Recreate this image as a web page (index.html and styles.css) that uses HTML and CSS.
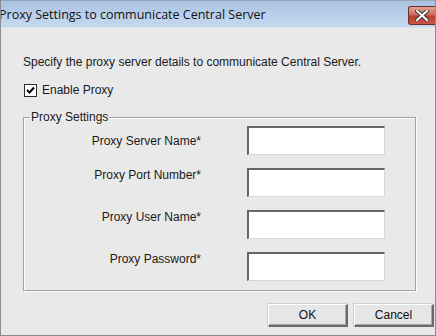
FILE: index.html
```html
<!DOCTYPE html>
<html>
  <head>
    <title>Proxy Settings</title>
    <link rel="stylesheet" href="styles.css">
  </head>
  <body>

    <div class="window">
      <div class="title-bar">
        <span class="title-text">Proxy Settings to communicate Central Server</span>
        <span class="close-button">
          <svg width="14" height="11" viewBox="0 0 14 11">
            <path d="M2 1 L12 10 M12 1 L2 10" stroke="#3a3a3a" stroke-width="4" stroke-linecap="square"/>
            <path d="M2 1 L12 10 M12 1 L2 10" stroke="#ffffff" stroke-width="2" stroke-linecap="square"/>
          </svg>
        </span>
      </div>

      <div class="content">
        <p class="intro">Specify the proxy server details to communicate Central Server.</p>

        <div class="check-row">
          <span class="check-box">
            <svg width="9" height="9" viewBox="0 0 9 9">
              <path d="M1 4 L3.5 6.5 L8 1.5" stroke="#000" stroke-width="2" fill="none"/>
            </svg>
          </span>
          <span>Enable Proxy</span>
        </div>

        <fieldset class="group">
          <legend>Proxy Settings</legend>
          <div class="form-grid">
            <label class="field-label first-label">Proxy Server Name*</label>
            <div class="text-box"></div>

            <label class="field-label">Proxy Port Number*</label>
            <div class="text-box"></div>

            <label class="field-label">Proxy User Name*</label>
            <div class="text-box"></div>

            <label class="field-label">Proxy Password*</label>
            <div class="text-box"></div>
          </div>
        </fieldset>

        <div class="button-row">
          <button class="dlg-button">OK</button>
          <button class="dlg-button">Cancel</button>
        </div>
      </div>
    </div>

  </body>
</html>
```

FILE: styles.css
```css
body{
  margin: 0;
  background-color: #e9e9e9;
}
p{
  margin: 0;
}
.window{
  width: 436px;
  height: 336px;
  box-sizing: border-box;
  border: 1px solid #8c8c8c;
  border-top: none;
  background-color: #e9e9e9;
  font-family: "Liberation Sans", Arial, sans-serif;
  font-size: 12px;
  color: #1a1a1a;
  overflow: hidden;
}
.title-bar{
  display: flex;
  align-items: flex-start;
  height: 26px;
  border-top: 1px solid #9aa7b6;
  border-bottom: 1px solid #dfe8f2;
  background: linear-gradient(#a9c2e1, #bcd2ec 60%, #c3d7ee);
}
.title-text{
  font-family: "Open Sans", "Noto Sans", sans-serif;
  font-size: 12.5px;
  line-height: 28px;
  color: #111;
  margin-left: -2px;
}
.close-button{
  display: flex;
  justify-content: center;
  align-items: center;
  width: 26px;
  height: 17px;
  margin-left: auto;
  margin-top: 5px;
  border: 1px solid #6b3028;
  border-right: none;
  border-radius: 3px 0 0 3px;
  background: linear-gradient(#e3a295, #cf6b5c 45%, #bd3d2d 55%, #c9584a);
}
.content{
  padding-left: 22px;
  padding-top: 27px;
}
.intro{
  line-height: 14px;
}
.check-row{
  display: flex;
  align-items: center;
  gap: 5px;
  margin-top: 14px;
  height: 14px;
}
.check-box{
  display: flex;
  justify-content: center;
  align-items: center;
  width: 11px;
  height: 11px;
  border: 1px solid #2a2a2a;
  background-color: #fff;
  margin-left: 1px;
}
.group{
  width: 393px;
  box-sizing: border-box;
  margin: 13px 0 0 0;
  padding: 0 0 9px 0;
  border: 1px solid #a0a0a0;
  box-shadow: 1px 1px 0 #fff, inset 1px 1px 0 #fff;
}
.group legend{
  margin-left: 6px;
  padding: 0 1px;
  line-height: 14px;
}
.form-grid{
  display: grid;
  grid-template-columns: 177px 138px;
  column-gap: 46px;
  row-gap: 13px;
  padding-top: 2px;
}
.field-label{
  text-align: right;
  line-height: 14px;
  align-self: start;
}
.first-label{
  padding-top: 8px;
}
.text-box{
  height: 29px;
  box-sizing: border-box;
  background-color: #fff;
  border-top: 2px solid #666;
  border-left: 2px solid #666;
  border-bottom: 1px solid #d8d8d8;
  border-right: 1px solid #d8d8d8;
}
.button-row{
  display: flex;
  justify-content: flex-end;
  gap: 6px;
  margin-top: 13px;
  padding-right: 1px;
}
.dlg-button{
  width: 80px;
  height: 23px;
  box-sizing: border-box;
  padding: 0;
  font-family: "Liberation Sans", Arial, sans-serif;
  font-size: 12px;
  color: #111;
  background-color: #e6e6e6;
  border-top: 1px solid #fff;
  border-left: 1px solid #fff;
  border-bottom: 2px solid #6a6a6a;
  border-right: 2px solid #6a6a6a;
  box-shadow: inset -1px -1px 0 #a8a8a8, -1px -1px 0 #cfcfcf;
}
```
